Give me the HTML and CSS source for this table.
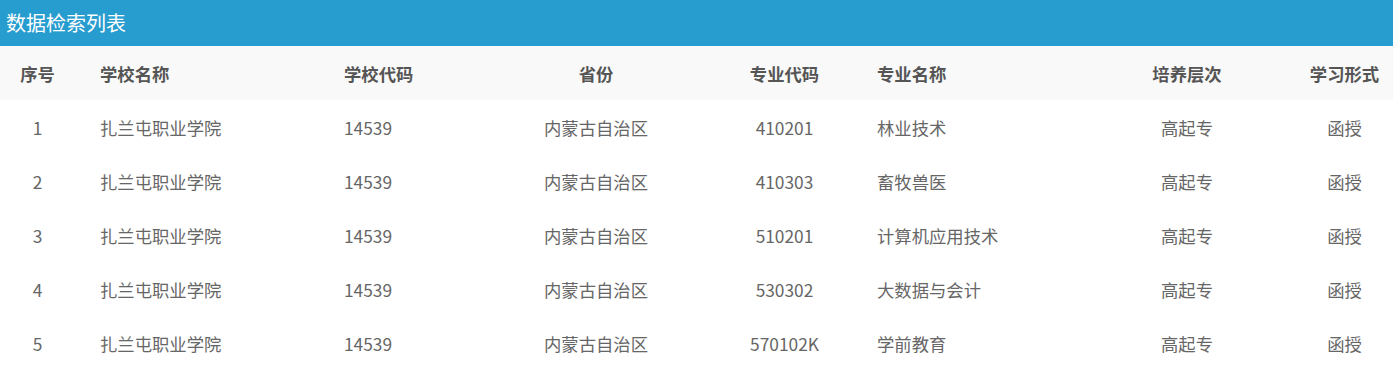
FILE: index.html
```html
<!DOCTYPE html>
<html lang="zh-CN">
<head>
<meta charset="utf-8">
<title>数据检索列表</title>
<link rel="stylesheet" href="styles.css">
</head>
<body>
<div class="panel">
  <div class="panel-title">数据检索列表</div>
  <table class="data-table">
    <colgroup>
      <col class="c1"><col class="c2"><col class="c3"><col class="c4"><col class="c5"><col class="c6"><col class="c7"><col class="c8">
    </colgroup>
    <thead>
      <tr>
        <th class="center">序号</th>
        <th class="left">学校名称</th>
        <th class="left">学校代码</th>
        <th class="center">省份</th>
        <th class="center">专业代码</th>
        <th class="left0">专业名称</th>
        <th class="center">培养层次</th>
        <th class="center">学习形式</th>
      </tr>
    </thead>
    <tbody>
      <tr><td class="center">1</td><td class="left">扎兰屯职业学院</td><td class="left">14539</td><td class="center">内蒙古自治区</td><td class="center">410201</td><td class="left0">林业技术</td><td class="center">高起专</td><td class="center">函授</td></tr>
      <tr><td class="center">2</td><td class="left">扎兰屯职业学院</td><td class="left">14539</td><td class="center">内蒙古自治区</td><td class="center">410303</td><td class="left0">畜牧兽医</td><td class="center">高起专</td><td class="center">函授</td></tr>
      <tr><td class="center">3</td><td class="left">扎兰屯职业学院</td><td class="left">14539</td><td class="center">内蒙古自治区</td><td class="center">510201</td><td class="left0">计算机应用技术</td><td class="center">高起专</td><td class="center">函授</td></tr>
      <tr><td class="center">4</td><td class="left">扎兰屯职业学院</td><td class="left">14539</td><td class="center">内蒙古自治区</td><td class="center">530302</td><td class="left0">大数据与会计</td><td class="center">高起专</td><td class="center">函授</td></tr>
      <tr><td class="center">5</td><td class="left">扎兰屯职业学院</td><td class="left">14539</td><td class="center">内蒙古自治区</td><td class="center">570102K</td><td class="left0">学前教育</td><td class="center">高起专</td><td class="center">函授</td></tr>
    </tbody>
  </table>
</div>
</body>
</html>
```

FILE: styles.css
```css
html, body {
  margin: 0;
  padding: 0;
  background: #ffffff;
}
body {
  font-family: "Noto Sans CJK SC", "Noto Sans", sans-serif;
}
.panel {
  width: 1393px;
}
.panel-title {
  height: 46px;
  line-height: 45px;
  background: #279cce;
  color: #ffffff;
  font-size: 20px;
  padding-left: 6px;
}
.data-table {
  width: 1393px;
  table-layout: fixed;
  border-collapse: collapse;
  font-size: 17.33px;
}
.c1 { width: 75px; }
.c2 { width: 244px; }
.c3 { width: 181px; }
.c4 { width: 192px; }
.c5 { width: 185px; }
.c6 { width: 201px; }
.c7 { width: 218px; }
.c8 { width: 97px; }
.data-table th,
.data-table td {
  height: 54px;
  padding: 0;
  white-space: nowrap;
}
.data-table thead tr {
  background: #f9f9f9;
}
.data-table th {
  color: #555555;
  font-weight: bold;
}
.data-table td {
  color: #666666;
  font-weight: normal;
}
.center { text-align: center; }
.left { text-align: left; padding-left: 25px !important; }
.left0 { text-align: left; }
```
